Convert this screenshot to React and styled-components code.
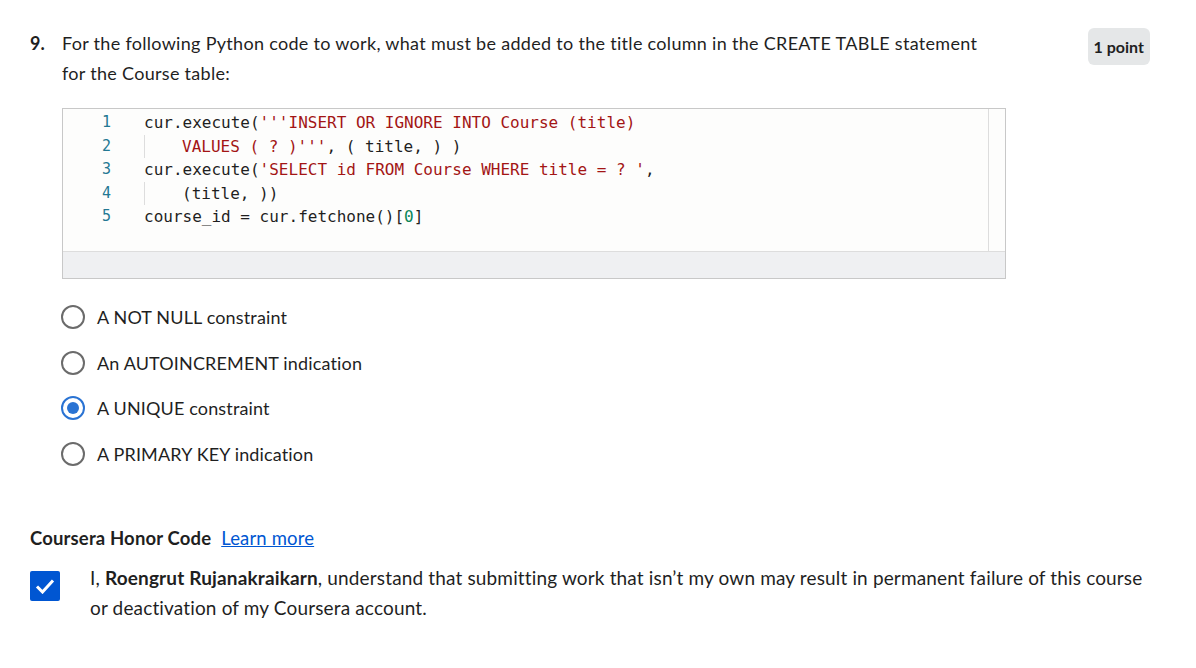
import React from 'react';
import styled, { createGlobalStyle } from 'styled-components';

const GlobalStyle = createGlobalStyle`
  body {
    margin: 0;
    background: #ffffff;
    font-family: Lato, "Open Sans", sans-serif;
    color: #1f1f1f;
    letter-spacing: 0.15px;
  }
`;

const Page = styled.div`
  padding: 28px 46px 40px 30px;
`;

const QuestionRow = styled.div`
  display: flex;
  align-items: flex-start;
`;

const Number = styled.div`
  width: 32px;
  flex: none;
  font-weight: 700;
  font-size: 18px;
  line-height: 30px;
`;

const Body = styled.div`
  flex: 1;
  min-width: 0;
`;

const Prompt = styled.div`
  font-size: 18px;
  line-height: 30px;
  letter-spacing: 0.3px;
  max-width: 926px;
`;

const Badge = styled.div`
  flex: none;
  background: #e5e7e8;
  border-radius: 6px;
  padding: 0 6px;
  height: 37px;
  line-height: 37px;
  font-size: 16px;
  font-weight: 700;
  letter-spacing: 0;
`;

const CodeBox = styled.div`
  margin-top: 20px;
  width: 944px;
  border: 1px solid #c8c8c8;
  box-sizing: border-box;
  display: flex;
  flex-direction: column;
`;

const Editor = styled.div`
  display: flex;
  height: 142px;
  background: #fdfdfc;
`;

const Lines = styled.div`
  flex: 1;
  padding-top: 2px;
  font-family: "DejaVu Sans Mono", "Liberation Mono", monospace;
  font-size: 16px;
  line-height: 23.5px;
  letter-spacing: 0;
  color: #1f1f1f;
`;

const Line = styled.div`
  display: flex;
`;

const LineNo = styled.div`
  width: 48px;
  flex: none;
  text-align: right;
  color: #237893;
  font-size: 15px;
`;

const Code = styled.div`
  margin-left: 33px;
  white-space: pre;
`;

const Wrapped = styled.div`
  border-left: 1px solid #dddddd;
  padding-left: 37px;
`;

const Str = styled.span`
  color: #a31515;
`;

const Num = styled.span`
  color: #098658;
`;

const VScroll = styled.div`
  width: 16px;
  flex: none;
  border-left: 1px solid #dddddd;
  background: #fdfdfc;
`;

const HScroll = styled.div`
  height: 26px;
  border-top: 1px solid #dddddd;
  background: #eff0f2;
`;

const Options = styled.div`
  margin-top: 24px;
  margin-left: -1px;
  display: flex;
  flex-direction: column;
  gap: 17.5px;
`;

const Option = styled.label`
  display: flex;
  align-items: center;
  gap: 12px;
  font-size: 18px;
  line-height: 28px;
`;

const Radio = styled.span`
  width: 24px;
  height: 24px;
  box-sizing: border-box;
  border-radius: 50%;
  border: 2px solid ${(p) => (p.checked ? '#2a73d3' : '#6b6b6b')};
  display: flex;
  align-items: center;
  justify-content: center;
  &::after {
    content: '';
    width: 12px;
    height: 12px;
    border-radius: 50%;
    background: ${(p) => (p.checked ? '#2a73d3' : 'transparent')};
  }
`;

const Honor = styled.div`
  margin-top: 55px;
`;

const HonorTitle = styled.div`
  font-size: 18.5px;
  line-height: 30px;
  font-weight: 700;
  display: flex;
  gap: 10px;
`;

const Link = styled.a`
  font-weight: 400;
  color: #0056d2;
  text-decoration: underline;
`;

const Agree = styled.div`
  margin-top: 10px;
  display: flex;
  gap: 30px;
  font-size: 19px;
  line-height: 30px;
`;

const Checkbox = styled.span`
  width: 30px;
  height: 30px;
  flex: none;
  margin-top: 8px;
  border-radius: 2px;
  background: #0056d2;
  display: flex;
  align-items: center;
  justify-content: center;
`;

const AgreeText = styled.div`
  max-width: 1062px;
`;

const options = [
  { text: 'A NOT NULL constraint' },
  { text: 'An AUTOINCREMENT indication' },
  { text: 'A UNIQUE constraint', checked: true },
  { text: 'A PRIMARY KEY indication' },
];

export default function App() {
  return (
    <Page>
      <GlobalStyle />
      <QuestionRow>
        <Number>9.</Number>
        <Body>
          <Prompt>
            For the following Python code to work, what must be added to the title column in the CREATE TABLE statement
            for the Course table:
          </Prompt>
          <CodeBox>
            <Editor>
              <Lines>
                <Line>
                  <LineNo>1</LineNo>
                  <Code>
                    cur.execute(<Str>'''INSERT OR IGNORE INTO Course (title)</Str>
                  </Code>
                </Line>
                <Line>
                  <LineNo>2</LineNo>
                  <Code>
                    <Wrapped>
                      <Str>VALUES ( ? )'''</Str>, ( title, ) )
                    </Wrapped>
                  </Code>
                </Line>
                <Line>
                  <LineNo>3</LineNo>
                  <Code>
                    cur.execute(<Str>'SELECT id FROM Course WHERE title = ? '</Str>,
                  </Code>
                </Line>
                <Line>
                  <LineNo>4</LineNo>
                  <Code>
                    <Wrapped>(title, ))</Wrapped>
                  </Code>
                </Line>
                <Line>
                  <LineNo>5</LineNo>
                  <Code>
                    course_id = cur.fetchone()[<Num>0</Num>]
                  </Code>
                </Line>
              </Lines>
              <VScroll />
            </Editor>
            <HScroll />
          </CodeBox>
          <Options>
            {options.map((o) => (
              <Option key={o.text}>
                <Radio checked={o.checked} />
                {o.text}
              </Option>
            ))}
          </Options>
        </Body>
        <Badge>1 point</Badge>
      </QuestionRow>
      <Honor>
        <HonorTitle>
          Coursera Honor Code <Link href="#">Learn more</Link>
        </HonorTitle>
        <Agree>
          <Checkbox>
            <svg width="20" height="16" viewBox="0 0 20 16">
              <path d="M2 8.5 L7.5 14 L18 2.5" fill="none" stroke="#ffffff" strokeWidth="3" />
            </svg>
          </Checkbox>
          <AgreeText>
            I, <b>Roengrut Rujanakraikarn</b>, understand that submitting work that isn’t my own may result in permanent failure of this course
            or deactivation of my Coursera account.
          </AgreeText>
        </Agree>
      </Honor>
    </Page>
  );
}
